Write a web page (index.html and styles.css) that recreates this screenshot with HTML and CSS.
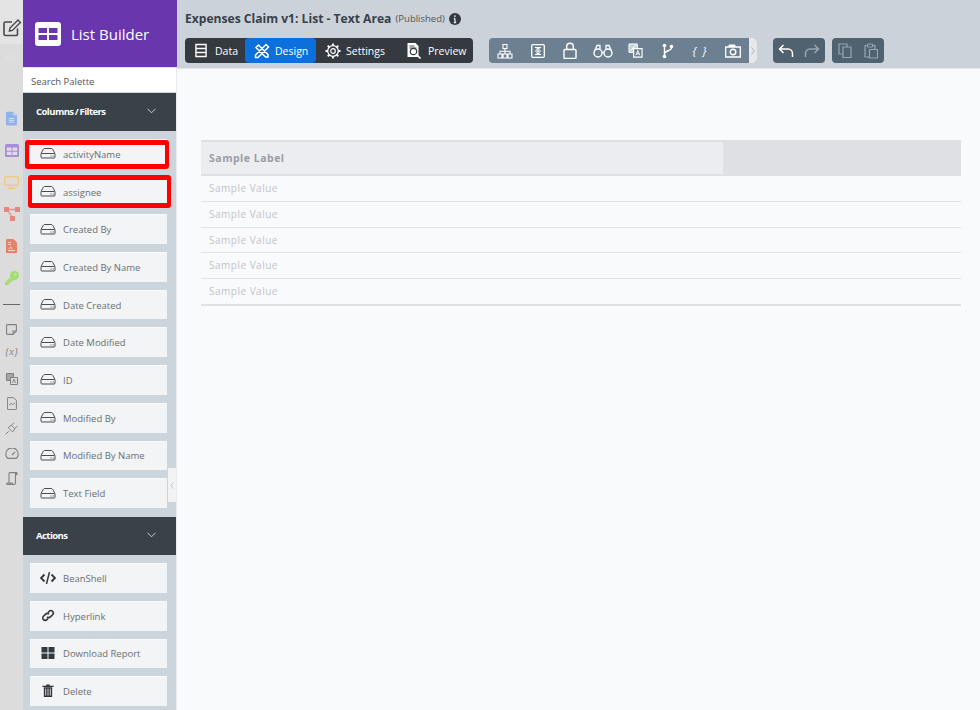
FILE: index.html
```html
<!DOCTYPE html>
<html lang="en">
<head>
<meta charset="utf-8">
<title>List Builder</title>
<link rel="stylesheet" href="styles.css">
</head>
<body>
<svg class="defs" width="0" height="0" aria-hidden="true">
  <symbol id="hdd" viewBox="0 0 16 12"><path d="M1 6.500L3.400 2.200Q3.800 1.500 4.600 1.500h6.800Q12.200 1.500 12.600 2.200L15 6.500" fill="none" stroke="currentColor" stroke-width="1"/><rect x="1" y="6.500" width="14" height="4.500" rx=".8" fill="none" stroke="currentColor" stroke-width="1"/><path d="M10.500 9h1M12.700 9h1" stroke="currentColor" stroke-width="1"/></symbol>
</svg>
<div class="app">
  <nav class="rail">
    <div class="rail-top">
      <svg viewBox="0 0 20 20" width="20" height="20"><path d="M15.500 10.500V16a1.500 1.500 0 0 1-1.500 1.500H3.500A1.500 1.500 0 0 1 2 16V5.500A1.500 1.500 0 0 1 3.500 4H10" fill="none" stroke="#4a4a4a" stroke-width="1.600"/><path d="M8 10L16 2l2.400 2.400-8 8L7.400 13z" fill="none" stroke="#4a4a4a" stroke-width="1.400"/></svg>
    </div>
    <div class="rail-ghost">APP</div>
    <div class="rail-a">
      <svg viewBox="0 0 12 15" width="11" height="15"><path d="M1.500 0H8l4 4v9.500a1.500 1.500 0 0 1-1.500 1.500h-9A1.500 1.500 0 0 1 0 13.500V1.500A1.500 1.500 0 0 1 1.500 0z" fill="#8fb2ea"/><path d="M8 0v4h4" fill="#c6d6ef"/><path d="M3 7.500h6M3 9.500h6M3 11.500h6" stroke="#d9e3f3" stroke-width="1"/></svg>
      <svg viewBox="0 0 14 13" width="14" height="13"><rect width="14" height="13" rx="1.500" fill="#a88ed6"/><path d="M1.800 3.500h4.700v3.200H1.800zM7.500 3.500h4.700v3.200H7.500zM1.800 7.800h4.700v3.200H1.800zM7.500 7.800h4.700v3.200H7.500z" fill="#dfdce6"/></svg>
      <svg viewBox="0 0 15 13" width="15" height="13"><rect x=".7" y=".7" width="13.600" height="8.600" rx=".8" fill="none" stroke="#f0ca80" stroke-width="1.400"/><path d="M7.500 10v2M3.500 12.300h8" stroke="#f0ca80" stroke-width="1.500"/></svg>
      <svg viewBox="0 0 16 14" width="16" height="14"><path d="M3 2.500h10M3 2.500l5.500 8" stroke="#e99088" stroke-width="1.300" fill="none"/><rect x="0" y="0" width="5" height="5" rx=".5" fill="#e8857c"/><rect x="11" y="0" width="5" height="5" rx=".5" fill="#e8857c"/><rect x="6" y="9" width="5" height="5" rx=".5" fill="#e8857c"/></svg>
      <svg viewBox="0 0 11 14" width="11" height="14"><path d="M1 0h6.500L11 3.500V14H0V1a1 1 0 0 1 1-1z" fill="#e5836a"/><path d="M2 3.500h3M2 5.500h3" stroke="#f4d5ca" stroke-width="1"/><path d="M2 11.500h7M3 10q2-4 3 0" fill="none" stroke="#f4d5ca" stroke-width="1"/></svg>
      <svg viewBox="0 0 14 14" width="14" height="14"><circle cx="9.500" cy="4.500" r="4.500" fill="#a6dc72"/><path d="M6.500 5L0 11.500V14h3l1-1v-1h1.500v-1.500H7L9 8.500z" fill="#a6dc72"/><circle cx="10.500" cy="3.500" r="1" fill="#dcdcdc"/></svg>
    </div>
    <hr class="rail-rule">
    <div class="rail-b">
      <svg viewBox="0 0 11 11" width="11" height="11"><path d="M1.200.6h8.600a.6.6 0 0 1 .6.600V7l-3.400 3.400H1.200a.6.6 0 0 1-.6-.6V1.200a.6.6 0 0 1 .6-.6zM7 10.400V7h3.400" fill="none" stroke="#808080" stroke-width="1.100"/></svg>
      <span class="rail-var">{x}</span>
      <svg viewBox="0 0 12 12" width="12" height="12"><path d="M.5.500h7v7h-7z" fill="#a5a5a5" stroke="#808080"/><path d="M4.500 4.500h7v7h-7z" fill="#dcdcdc" stroke="#808080"/><path d="M6.500 10l1.500-4 1.500 4" fill="none" stroke="#777" stroke-width=".8"/></svg>
      <svg viewBox="0 0 10 13" width="10" height="13"><path d="M1 .6h5.500L9.400 3.500V12a.6.6 0 0 1-.6.600H1a.6.6 0 0 1-.6-.600V1.200A.6.6 0 0 1 1 .6z" fill="none" stroke="#808080" stroke-width="1"/><path d="M2 8l2-1.500 1.500 1 2.500-1.500" fill="none" stroke="#808080" stroke-width=".9"/></svg>
      <svg viewBox="0 0 13 13" width="13" height="13"><path d="M.6 12.400l3-3M3.300 5.800l3.900 3.900 1.500-.8 1-2.400-3-3-2.400 1zM6.500 3.200L9 .7M9.800 6.500l2.500-2.500" fill="none" stroke="#808080" stroke-width="1"/></svg>
      <svg viewBox="0 0 14 11" width="14" height="11"><path d="M2.600 10.400a6.200 6.200 0 1 1 8.800 0z" fill="none" stroke="#808080" stroke-width="1.100"/><path d="M7 7l3-3" stroke="#808080" stroke-width="1.100"/></svg>
      <svg viewBox="0 0 12 13" width="12" height="13"><path d="M3 11V1.500A1 1 0 0 1 4 .6h7M9.500 .6V11a1.500 1.500 0 0 1-1.500 1.400H1.200c-.6 0-.6-1.400 0-1.400H7" fill="none" stroke="#808080" stroke-width="1.100"/><rect x="9.500" y=".6" width="2" height="2.500" fill="#808080"/></svg>
    </div>
  </nav>

  <aside class="side">
    <header class="brand">
      <svg viewBox="0 0 26 24" width="26" height="24"><rect width="26" height="24" rx="3" fill="#fff"/><path d="M3.500 6h8.500v5H3.500zM14 6h8.500v5H14zM3.500 13h8.500v5H3.500zM14 13h8.500v5H14z" fill="#6a36ae"/></svg>
      <span>List Builder</span>
    </header>
    <div class="search">Search Palette</div>
    <div class="section first"><span>Columns / Filters</span><svg viewBox="0 0 10 6" width="9" height="6"><path d="M.6.6L5 5 9.400.6" fill="none" stroke="#d8dde2" stroke-width="1"/></svg></div>
    <div class="items">
      <div class="item"><svg class="i" width="16" height="12"><use href="#hdd"/></svg><span>activityName</span></div>
      <div class="item"><svg class="i" width="16" height="12"><use href="#hdd"/></svg><span>assignee</span></div>
      <div class="item"><svg class="i" width="16" height="12"><use href="#hdd"/></svg><span>Created By</span></div>
      <div class="item"><svg class="i" width="16" height="12"><use href="#hdd"/></svg><span>Created By Name</span></div>
      <div class="item"><svg class="i" width="16" height="12"><use href="#hdd"/></svg><span>Date Created</span></div>
      <div class="item"><svg class="i" width="16" height="12"><use href="#hdd"/></svg><span>Date Modified</span></div>
      <div class="item"><svg class="i" width="16" height="12"><use href="#hdd"/></svg><span>ID</span></div>
      <div class="item"><svg class="i" width="16" height="12"><use href="#hdd"/></svg><span>Modified By</span></div>
      <div class="item"><svg class="i" width="16" height="12"><use href="#hdd"/></svg><span>Modified By Name</span></div>
      <div class="item"><svg class="i" width="16" height="12"><use href="#hdd"/></svg><span>Text Field</span></div>
    </div>
    <div class="section"><span>Actions</span><svg viewBox="0 0 10 6" width="9" height="6"><path d="M.6.6L5 5 9.400.6" fill="none" stroke="#d8dde2" stroke-width="1"/></svg></div>
    <div class="items">
      <div class="item"><svg class="i" viewBox="0 0 16 12" width="16" height="12"><path d="M4.500 2.500L1 6l3.500 3.500M11.500 2.500L15 6l-3.500 3.500" fill="none" stroke="#33383d" stroke-width="1.800"/><path d="M9.500 0L6.500 12" stroke="#33383d" stroke-width="1.500"/></svg><span>BeanShell</span></div>
      <div class="item"><svg class="i" viewBox="0 0 14 14" width="16" height="13"><path d="M6 8.500a2.500 2.500 0 0 0 3.600 0l2.300-2.300a2.600 2.600 0 0 0-3.700-3.700L7 3.700M8 5.500a2.500 2.500 0 0 0-3.600 0L2.100 7.800a2.600 2.600 0 0 0 3.700 3.700L7 10.300" fill="none" stroke="#33383d" stroke-width="1.700"/></svg><span>Hyperlink</span></div>
      <div class="item"><svg class="i" viewBox="0 0 13 12" width="16" height="12"><path d="M0 0h6v5.500H0zM7 0h6v5.500H7zM0 6.500h6V12H0zM7 6.500h6V12H7z" fill="#33383d"/></svg><span>Download Report</span></div>
      <div class="item"><svg class="i" viewBox="0 0 12 14" width="16" height="13"><path d="M0 2h12v1.200H0zM4 .5h4V2H4z" fill="#33383d"/><path d="M1.500 3.500h9V14h-9z" fill="#33383d"/><path d="M3.500 5v7.500M6 5v7.500M8.500 5v7.500" stroke="#f1f3f5" stroke-width=".9"/></svg><span>Delete</span></div>
    </div>
    <div class="collapse"><svg viewBox="0 0 4 8" width="4" height="7"><path d="M3.500.5L.6 4l2.900 3.500" fill="none" stroke="#aab4bc" stroke-width=".8"/></svg></div>
    <div class="mark m1"></div>
    <div class="mark m2"></div>
  </aside>

  <main class="main">
    <header class="top">
      <h1 class="title">Expenses Claim v1: List - Text Area <small>(Published)</small>
        <svg viewBox="0 0 12 12" width="12" height="12"><circle cx="6" cy="6" r="6" fill="#343a40"/><path d="M6 2.300v1.700M6 5.500V9.500M4.800 5.500H6M4.800 9.500h2.400" stroke="#e5e8eb" stroke-width="1.300"/></svg>
      </h1>
      <div class="bars">
        <div class="tabs">
          <span class="tab t1"><svg viewBox="0 0 13 15" width="12" height="15"><path d="M1 1h11v13H1zM1 5.300h11M1 9.700h11" fill="none" stroke="#fff" stroke-width="1.500"/></svg>Data</span>
          <span class="tab t2 on"><svg viewBox="0 0 16 16" width="16" height="16"><path d="M2 4.500L4.500 2 14 11.500V14h-2.500zM12 1.500L14.500 4 4 14.500H1.500V12z" fill="none" stroke="#fff" stroke-width="1.500"/></svg>Design</span>
          <span class="tab t3"><svg viewBox="0 0 16 16" width="16" height="16"><circle cx="8" cy="8" r="2.300" fill="none" stroke="#fff" stroke-width="1.200"/><circle cx="8" cy="8" r="5.300" fill="none" stroke="#fff" stroke-width="1.200"/><path d="M8 .5v2.500M8 13v2.500M.5 8H3M13 8h2.500M2.700 2.700l1.800 1.800M11.500 11.500l1.800 1.800M2.700 13.300l1.800-1.800M11.500 4.500l1.800-1.800" stroke="#fff" stroke-width="1.800"/></svg>Settings</span>
          <span class="tab t4"><svg viewBox="0 0 16 17" width="16" height="17"><path d="M1.500 1h8l3 3v11h-11z" fill="#fff"/><path d="M3.500 4h5M3.500 6h7" stroke="#343a40" stroke-width=".9"/><circle cx="7.500" cy="9.500" r="3.200" fill="#fff" stroke="#343a40" stroke-width="1.200"/><path d="M10 12l4.500 4.500" stroke="#fff" stroke-width="1.700"/></svg>Preview</span>
        </div>
        <div class="tools">
          <svg viewBox="0 0 16 16" width="16" height="16"><path d="M6 1.500h4v4H6zM1 11h4v4H1zM6 11h4v4H6zM11 11h4v4h-4zM8 5.500V11M3 11V8.300h10V11" fill="none" stroke="#fff" stroke-width="1.100"/></svg>
          <svg viewBox="0 0 14 14" width="14" height="14"><rect x=".7" y=".7" width="12.600" height="12.600" rx="1" fill="none" stroke="#fff" stroke-width="1.300"/><path d="M4 3.500h6M4 10.500h6M7 4v6M5 5.500L7 4l2 1.500M5 8.500L7 10l2-1.500M4 7h6" fill="none" stroke="#fff"/></svg>
          <svg viewBox="0 0 14 17" width="14" height="17"><rect x="1" y="7.500" width="12" height="9" rx="1" fill="none" stroke="#fff" stroke-width="1.400"/><path d="M3.700 7.500V4.500a3.300 3.300 0 0 1 6.600 0v3" fill="none" stroke="#fff" stroke-width="1.400"/></svg>
          <svg viewBox="0 0 20 14" width="20" height="14"><circle cx="5" cy="9" r="4" fill="none" stroke="#fff" stroke-width="1.400"/><circle cx="15" cy="9" r="4" fill="none" stroke="#fff" stroke-width="1.400"/><path d="M9 8.500h2M1.500 7l2.500-5.500h3V5M18.500 7L16 1.500h-3V5" fill="none" stroke="#fff" stroke-width="1.300"/></svg>
          <svg viewBox="0 0 16 16" width="15" height="15"><path d="M1 1h9v9H1z" fill="#c9d1d8" stroke="#fff"/><path d="M6 6h9v9H6z" fill="#6c8091" stroke="#fff" stroke-width="1.200"/><path d="M8.500 13l2-5 2 5M9.200 11.500h2.600M3 8l5-6" fill="none" stroke="#fff"/></svg>
          <svg viewBox="0 0 12 16" width="12" height="16"><path d="M2.500 3.500v9M9.500 5c0 3-7 2.500-7 6" fill="none" stroke="#fff" stroke-width="1.400"/><circle cx="2.500" cy="2.500" r="1.800" fill="#fff"/><circle cx="9.500" cy="3.500" r="1.800" fill="#fff"/><circle cx="2.500" cy="13.500" r="1.800" fill="#fff"/></svg>
          <span class="braces">{ }</span>
          <svg viewBox="0 0 16 14" width="16" height="14"><path d="M.7 3h14.600v10H.7z" fill="none" stroke="#fff" stroke-width="1.300"/><path d="M4 3V1h6v2" fill="#fff" stroke="#fff"/><circle cx="8" cy="8" r="2.800" fill="none" stroke="#fff" stroke-width="1.400"/></svg>
          <span class="tools-end"><svg viewBox="0 0 4 8" width="4" height="8"><path d="M.5.5L3.400 4 .5 7.500" fill="none" stroke="#a3adb5" stroke-width=".9"/></svg></span>
        </div>
        <div class="mini undo">
          <svg viewBox="0 0 16 14" width="16" height="14"><path d="M5.500 1L1.500 5l4 4M2 5h8a4.500 4.500 0 0 1 4.500 4.500V13" fill="none" stroke="#fff" stroke-width="1.500"/></svg>
          <svg viewBox="0 0 16 14" width="16" height="14"><path d="M10.500 1l4 4-4 4M14 5H6a4.500 4.500 0 0 0-4.500 4.500V13" fill="none" stroke="#97a6b2" stroke-width="1.500"/></svg>
        </div>
        <div class="mini clip">
          <svg viewBox="0 0 14 15" width="14" height="15"><path d="M1 1h8v10H1z" fill="none" stroke="#97a6b2" stroke-width="1.200"/><path d="M5 4h8v10.500H5z" fill="#50616f" stroke="#97a6b2" stroke-width="1.200"/></svg>
          <svg viewBox="0 0 14 16" width="14" height="16"><path d="M3 2.500H1V14h4M9 2.500h2V6" fill="none" stroke="#97a6b2" stroke-width="1.200"/><path d="M3.500 1h5v3h-5z" fill="none" stroke="#97a6b2"/><path d="M5.500 6.500h8V15h-8z" fill="none" stroke="#97a6b2" stroke-width="1.200"/></svg>
        </div>
      </div>
    </header>
    <section class="canvas">
      <div class="table">
        <div class="thead"><div class="th">Sample Label</div></div>
        <div class="row">Sample Value</div>
        <div class="row">Sample Value</div>
        <div class="row">Sample Value</div>
        <div class="row">Sample Value</div>
        <div class="row last">Sample Value</div>
      </div>
    </section>
  </main>
</div>
</body>
</html>
```
FILE: styles.css
```css
* { box-sizing: border-box; }
html, body { margin: 0; height: 100%; overflow: hidden; }
body { font-family: "Open Sans", sans-serif; background: #f9fafc; color: #343a40; }
.defs { position: absolute; }
.app { display: flex; width: 980px; height: 710px; overflow: hidden; }

.rail { width: 23px; flex: none; background: #dcdcdc; display: flex; flex-direction: column; overflow: hidden; }
.rail-top { height: 44px; background: #e4e4e4; display: flex; justify-content: center; padding-top: 18px; }
.rail-top svg { flex: none; }
.rail-ghost { height: 58px; padding: 7px 0 0 5px; font-size: 8px; line-height: 12px; color: #e2e2e2; white-space: nowrap; }
.rail-a { display: grid; grid-auto-rows: 32px; place-items: center; }
.rail-rule { width: 17px; height: 1px; border: 0; background: #666; margin: 10px 3px 12px; flex: none; }
.rail-b { display: grid; grid-auto-rows: 24.800px; place-items: center; }
.rail-var { font: italic 10.500px "Liberation Serif", serif; color: #858585; line-height: 14px; margin-top: -4px; }

.side { width: 154px; flex: none; position: relative; background: #cdd5dc; border-right: 1px solid #e8eaed; }
.brand { height: 67px; margin-right: -1px; background: #6a36ae; color: #fff; display: flex; align-items: center; gap: 10px; padding-left: 12px; font-size: 15px; }
.search { height: 25px; background: #fff; font-size: 9.500px; color: #555; line-height: 27px; padding-left: 8px; border-top: 1px solid #e8e8e8; }
.section { height: 38px; background: #3a4149; color: #fff; display: flex; align-items: center; justify-content: space-between; padding: 0 20px 2px 13px; font-size: 9.500px; font-weight: 700; letter-spacing: -.55px; word-spacing: -.6px; }
.section.first { margin-top: 1px; }
.items { display: flex; flex-direction: column; gap: 8px; padding: 8px 9px 9.300px 7px; }
.item { height: 29.700px; background: #f2f4f6; display: flex; align-items: center; gap: 7px; padding-left: 10px; font-size: 9.500px; color: #6b6f73; border-top: 1px solid #f8f9fa; }
.i { flex: none; color: #484d52; margin-top: -2px; }
.collapse { position: absolute; left: 145px; top: 468px; width: 8px; height: 34px; background: #f1f3f5; display: flex; align-items: center; justify-content: center; }
.mark { position: absolute; border-style: solid; border-color: #f00; border-width: 5px 4.500px; border-radius: 3px; }
.m1 { left: 2px; top: 140px; width: 144px; height: 29px; }
.m2 { left: 5px; top: 174.500px; width: 143px; height: 33px; }

.main { flex: 1; min-width: 0; display: flex; flex-direction: column; }
.top { height: 68px; background: #cbd2d9; padding: 11px 7px 0 8px; }
.title { margin: 0; font-size: 12.100px; font-weight: 700; line-height: 15px; color: #3a4149; display: flex; align-items: center; gap: 1px; white-space: pre; }
.title small { font-size: 9.500px; font-weight: 400; color: #555; }
.title svg { margin-left: 3px; }
.bars { display: flex; margin-top: 12px; height: 25px; }
.tabs { display: flex; width: 288px; background: #343a40; border-radius: 4px; font-size: 10.500px; color: #fff; }
.tab { display: flex; align-items: center; white-space: nowrap; }
.t1 { width: 60px; padding-left: 10px; gap: 8px; }
.t2 { width: 71px; padding-left: 9px; gap: 5px; }
.t3 { width: 81px; padding-left: 9px; gap: 5px; }
.t4 { width: 76px; padding-left: 9px; gap: 6px; }
.tab.on { background: #0b6fdc; border-radius: 4px; }
.tools { display: grid; grid-template-columns: repeat(8, 32.500px) 8px; align-items: center; justify-items: center; margin-left: 16px; width: 268px; background: #6c8091; border-radius: 4px; }
.braces { font: italic 11.500px "Open Sans", sans-serif; color: #fff; letter-spacing: 1.500px; }
.tools-end { width: 8px; height: 25px; background: #e6e8ea; border-radius: 0 4px 4px 0; display: flex; align-items: center; justify-content: center; }
.mini { display: flex; align-items: center; justify-content: space-between; background: #50616f; border-radius: 4px; }
.undo { width: 52px; margin-left: 16px; padding: 0 5px; }
.clip { width: 52px; margin-left: 7px; padding: 0 6px; }

.canvas { flex: 1; padding: 71px 19px 0 24px; border-top: 1px solid #e4e6e9; }
.table { width: 760px; }
.thead { height: 36px; background: #dee0e4; padding: 2px 0; }
.th { width: 522px; height: 32px; background: #ecedf0; font-size: 10.500px; font-weight: 700; color: #9a9da3; padding-left: 8px; line-height: 32px; letter-spacing: .5px; }
.row { height: 25.750px; font-size: 10px; color: #c2c4c8; padding-left: 8px; line-height: 24px; border-bottom: 1px solid #dfe1e5; letter-spacing: .5px; }
.row.last { height: 26.750px; border-bottom-width: 2px; }
```
